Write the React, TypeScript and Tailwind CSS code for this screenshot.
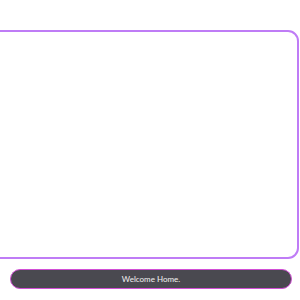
import React from "react";

export default function App() {
  return (
    <div className="w-[300px] h-[300px] overflow-hidden bg-white pt-[30px] font-['Lato',sans-serif]">
      {/* Main panel */}
      <div className="ml-[-12px] mr-[1px] h-[229px] rounded-[11px] border-2 border-[#bf7cf6]"></div>

      {/* Status bar */}
      <div className="mt-[10px] ml-[10px] mr-[8px] h-5 rounded-full border border-[#d24fd6] bg-[#4a4950] flex items-center justify-center">
        <span className="text-[8px] leading-none text-[#f2f2f2]">Welcome Home.</span>
      </div>
    </div>
  );
}
